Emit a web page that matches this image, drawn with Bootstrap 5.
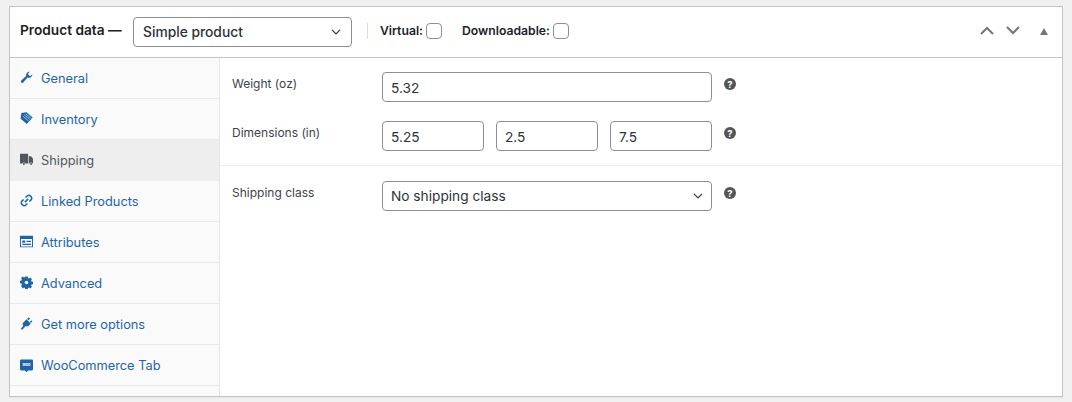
<!DOCTYPE html>
<html lang="en">
<head>
<meta charset="utf-8">
<title>Product data</title>
<link href="https://cdn.jsdelivr.net/npm/bootstrap@5.3.0/dist/css/bootstrap.min.css" rel="stylesheet">
<style>
html,body{height:402px;overflow:hidden}
body{background:#f0f0f1;font-family:Inter,"Liberation Sans",sans-serif;color:#3c434a;font-size:13px;padding:6px 9px 5px 9px}
.pd-box{height:391px;background:#fff;border:1px solid #c3c4c7;box-shadow:0 1px 1px rgba(0,0,0,.04)}
.pd-head{height:51px;border-bottom:1px solid #c3c4c7;padding:0 10px;color:#1d2327}
.pd-title{font-size:13.700px;font-weight:600;white-space:nowrap;width:113px;flex:none;margin-top:-3px}
.pd-head .form-select{width:219px;flex:none;height:30px;font-size:13.800px;font-weight:500;padding:2px 24px 0 9px;color:#2c3338;border-color:#8c8f94;border-radius:4px;background-position:right 8px center;background-size:14px 10px;margin-top:-1px}
.pd-sep{width:1px;height:16px;background:#dcdcde;margin:-2px 12px 0 15px;flex:none}
.pd-check{font-size:12.200px;font-weight:600;color:#1d2327;margin:-2px 20px 0 0;display:flex;align-items:center;gap:3px;white-space:nowrap}
.pd-check .form-check-input{width:16px;height:16px;margin:0;border:1px solid #8c8f94;border-radius:4px;flex:none}
.pd-arrows{color:#72777c;margin-top:-3px;padding-right:4px}
.pd-arrows svg+svg{margin-left:12px}
.pd-arrows .pd-tri{margin-left:20px;margin-top:1px}
.pd-tabs{width:210px;flex:none;background:#fafafa;border-right:1px solid #e5e5e5;border-radius:0}
.pd-tabs .list-group-item,.pd-tabs .list-group-item+.list-group-item.active{height:41px;background:transparent;border:0;border-bottom:1px solid #e9e9ea;border-radius:0;padding:2px 0 0 10px;display:flex;align-items:center;color:#1f65a6;font-size:12.800px;margin:0}
.pd-tabs .list-group-item.active,.pd-tabs .list-group-item+.list-group-item.active{background:#eee;color:#50575e;border-bottom-color:#eee}
.pd-tabs svg{width:13px;height:13px;fill:currentColor;flex:none;margin:-4px 8px 0 0}
.pd-tabs svg.pd-woo{height:14px;margin-top:-1px}
.pd-main{color:#3c434a}
.pd-group{padding:14px 12px 14px 12px}
.pd-line{display:flex;align-items:flex-start;margin-bottom:19px}
.pd-line:last-child{margin-bottom:0}
.pd-label{width:150px;flex:none;font-size:12px;margin:3px 0 0;line-height:18px}
.pd-fields{width:330px;flex:none}
.pd-dims{gap:12px}
.pd-main .form-control,.pd-main .form-select{height:30px;font-size:13.700px;color:#2c3338;border-color:#8c8f94;border-radius:4px;padding:1px 8px 0;line-height:28px}
.pd-main .form-select{padding-top:0;background-position:right 6px center;background-size:14px 10px}
.pd-tip{width:12px;height:12px;margin:6px 0 0 12px;flex:none}
.pd-div{border-top:1px solid #eee;padding-top:15px}
</style>
</head>
<body>
<div class="pd-box d-flex flex-column">
  <div class="pd-head d-flex align-items-center">
    <span class="pd-title">Product data —</span>
    <select class="form-select" aria-label="Product type"><option>Simple product</option></select>
    <span class="pd-sep"></span>
    <label class="pd-check">Virtual: <input class="form-check-input" type="checkbox"></label>
    <label class="pd-check">Downloadable: <input class="form-check-input" type="checkbox"></label>
    <div class="pd-arrows d-flex align-items-center ms-auto">
      <svg width="14" height="9" viewBox="0 0 14 9"><path d="M1 8l6-6 6 6" fill="none" stroke="currentColor" stroke-width="2"/></svg>
      <svg width="14" height="9" viewBox="0 0 14 9"><path d="M1 1l6 6 6-6" fill="none" stroke="currentColor" stroke-width="2"/></svg>
      <svg class="pd-tri" width="8" height="7" viewBox="0 0 8 7"><path d="M4 0L8 7H0z" fill="currentColor"/></svg>
    </div>
  </div>
  <div class="d-flex flex-grow-1">
    <div class="pd-tabs list-group">
      <a class="list-group-item" href="#"><svg viewBox="0 0 20 20"><path d="M19 5a5.500 5.500 0 0 1-7.400 5.100L4.900 17.600a2 2 0 0 1-2.900.1l-.2-.3a2 2 0 0 1 .2-2.800L9.400 7.800A5.500 5.500 0 0 1 15 1l-2.500 2.800.8 2.900 2.900.8z"/></svg>General</a>
      <a class="list-group-item" href="#"><svg viewBox="0 0 20 20"><path d="M10 .5l9.500 8-9 10L1 10.500 2 1.500z"/><path d="M6.500 4.500l9 7M4.800 6.800l8.500 7M9 3l8.500 7" stroke="#fafafa" stroke-width=".9" fill="none"/></svg>Inventory</a>
      <a class="list-group-item active" href="#"><svg viewBox="0 0 20 20"><path d="M0 1h12.500v15H8a2.200 2.200 0 0 0-4.200 0H0zM13.500 5H17l3 4v7h-1a2.200 2.200 0 0 0-4.200 0h-1.300z"/><circle cx="6" cy="17" r="1.500"/><circle cx="17" cy="17" r="1.500"/></svg>Shipping</a>
      <a class="list-group-item" href="#"><svg viewBox="0 0 20 20"><path d="M7.500 12.500l5-5M8.500 5.500L11 3a3.500 3.500 0 0 1 5 0l1 1a3.500 3.500 0 0 1 0 5l-2.500 2.500M11.500 14.500L9 17a3.500 3.500 0 0 1-5 0l-1-1a3.500 3.500 0 0 1 0-5l2.500-2.500" fill="none" stroke="currentColor" stroke-width="2.300"/></svg>Linked Products</a>
      <a class="list-group-item" href="#"><svg viewBox="0 0 20 20"><path fill-rule="evenodd" d="M0 1h20v18H0zM1.500 6v11.500h17V6zM3.500 8.500H8v3.500H3.500zM10 9h7v1.800h-7zM3.500 13.500H17v1.800H3.500z"/></svg>Attributes</a>
      <a class="list-group-item" href="#"><svg viewBox="0 0 20 20"><path d="M8 .5h4l.6 2.700 1.700.7 2.300-1.500 2.800 2.800-1.500 2.300.7 1.700 2.700.6v4l-2.700.6-.7 1.700 1.500 2.300-2.800 2.800-2.300-1.500-1.700.7-.6 2.700H8l-.6-2.700-1.700-.7-2.300 1.500L.6 16.700l1.500-2.300-.7-1.700L-1.300 12V8l2.700-.6.7-1.700L.6 3.400l2.800-2.800 2.300 1.500 1.700-.7z" transform="translate(1.100 .3) scale(.89)"/><circle cx="10" cy="10" r="2.800" fill="#fafafa"/></svg>Advanced</a>
      <a class="list-group-item" href="#"><svg viewBox="0 0 20 20"><path d="M4 9.500L10 3.500l6.500 6.500-2.500 3a4.500 4.500 0 0 1-5.200.8L3.500 19.500 1 18.500l4.200-5.200a4.500 4.500 0 0 1-1.200-3.800zM11 3l2.500-2.500 2 2L13 5zM15 7l3-1.800 1 2L16.500 9z"/></svg>Get more options</a>
      <a class="list-group-item" href="#"><svg class="pd-woo" viewBox="0 0 20 20"><path d="M2 0h16a2 2 0 0 1 2 2v13a2 2 0 0 1-2 2h-5.500L10 19.800 7.500 17H2a2 2 0 0 1-2-2V2a2 2 0 0 1 2-2z"/><text x="10" y="10.500" text-anchor="middle" font-size="6" font-weight="700" fill="#fafafa" font-family="Inter,sans-serif">woo</text></svg>WooCommerce Tab</a>
    </div>
    <div class="pd-main flex-grow-1">
      <div class="pd-group">
        <div class="pd-line">
          <label class="pd-label" for="w">Weight (oz)</label>
          <div class="pd-fields"><input id="w" class="form-control" type="text" value="5.32"></div>
          <svg class="pd-tip" viewBox="0 0 12 12"><circle cx="6" cy="6" r="6" fill="#555"/><text x="6" y="9.500" text-anchor="middle" font-size="9.500" font-weight="700" fill="#fff" font-family="Inter,sans-serif">?</text></svg>
        </div>
        <div class="pd-line">
          <label class="pd-label" for="l">Dimensions (in)</label>
          <div class="pd-fields d-flex pd-dims">
            <input id="l" class="form-control" type="text" value="5.25">
            <input class="form-control" type="text" value="2.5" aria-label="Width">
            <input class="form-control" type="text" value="7.5" aria-label="Height">
          </div>
          <svg class="pd-tip" viewBox="0 0 12 12"><circle cx="6" cy="6" r="6" fill="#555"/><text x="6" y="9.500" text-anchor="middle" font-size="9.500" font-weight="700" fill="#fff" font-family="Inter,sans-serif">?</text></svg>
        </div>
      </div>
      <div class="pd-div pd-group">
        <div class="pd-line">
          <label class="pd-label" for="s">Shipping class</label>
          <div class="pd-fields"><select id="s" class="form-select"><option>No shipping class</option></select></div>
          <svg class="pd-tip" viewBox="0 0 12 12"><circle cx="6" cy="6" r="6" fill="#555"/><text x="6" y="9.500" text-anchor="middle" font-size="9.500" font-weight="700" fill="#fff" font-family="Inter,sans-serif">?</text></svg>
        </div>
      </div>
    </div>
  </div>
</div>
<script src="https://cdn.jsdelivr.net/npm/bootstrap@5.3.0/dist/js/bootstrap.bundle.min.js"></script>
</body>
</html>
